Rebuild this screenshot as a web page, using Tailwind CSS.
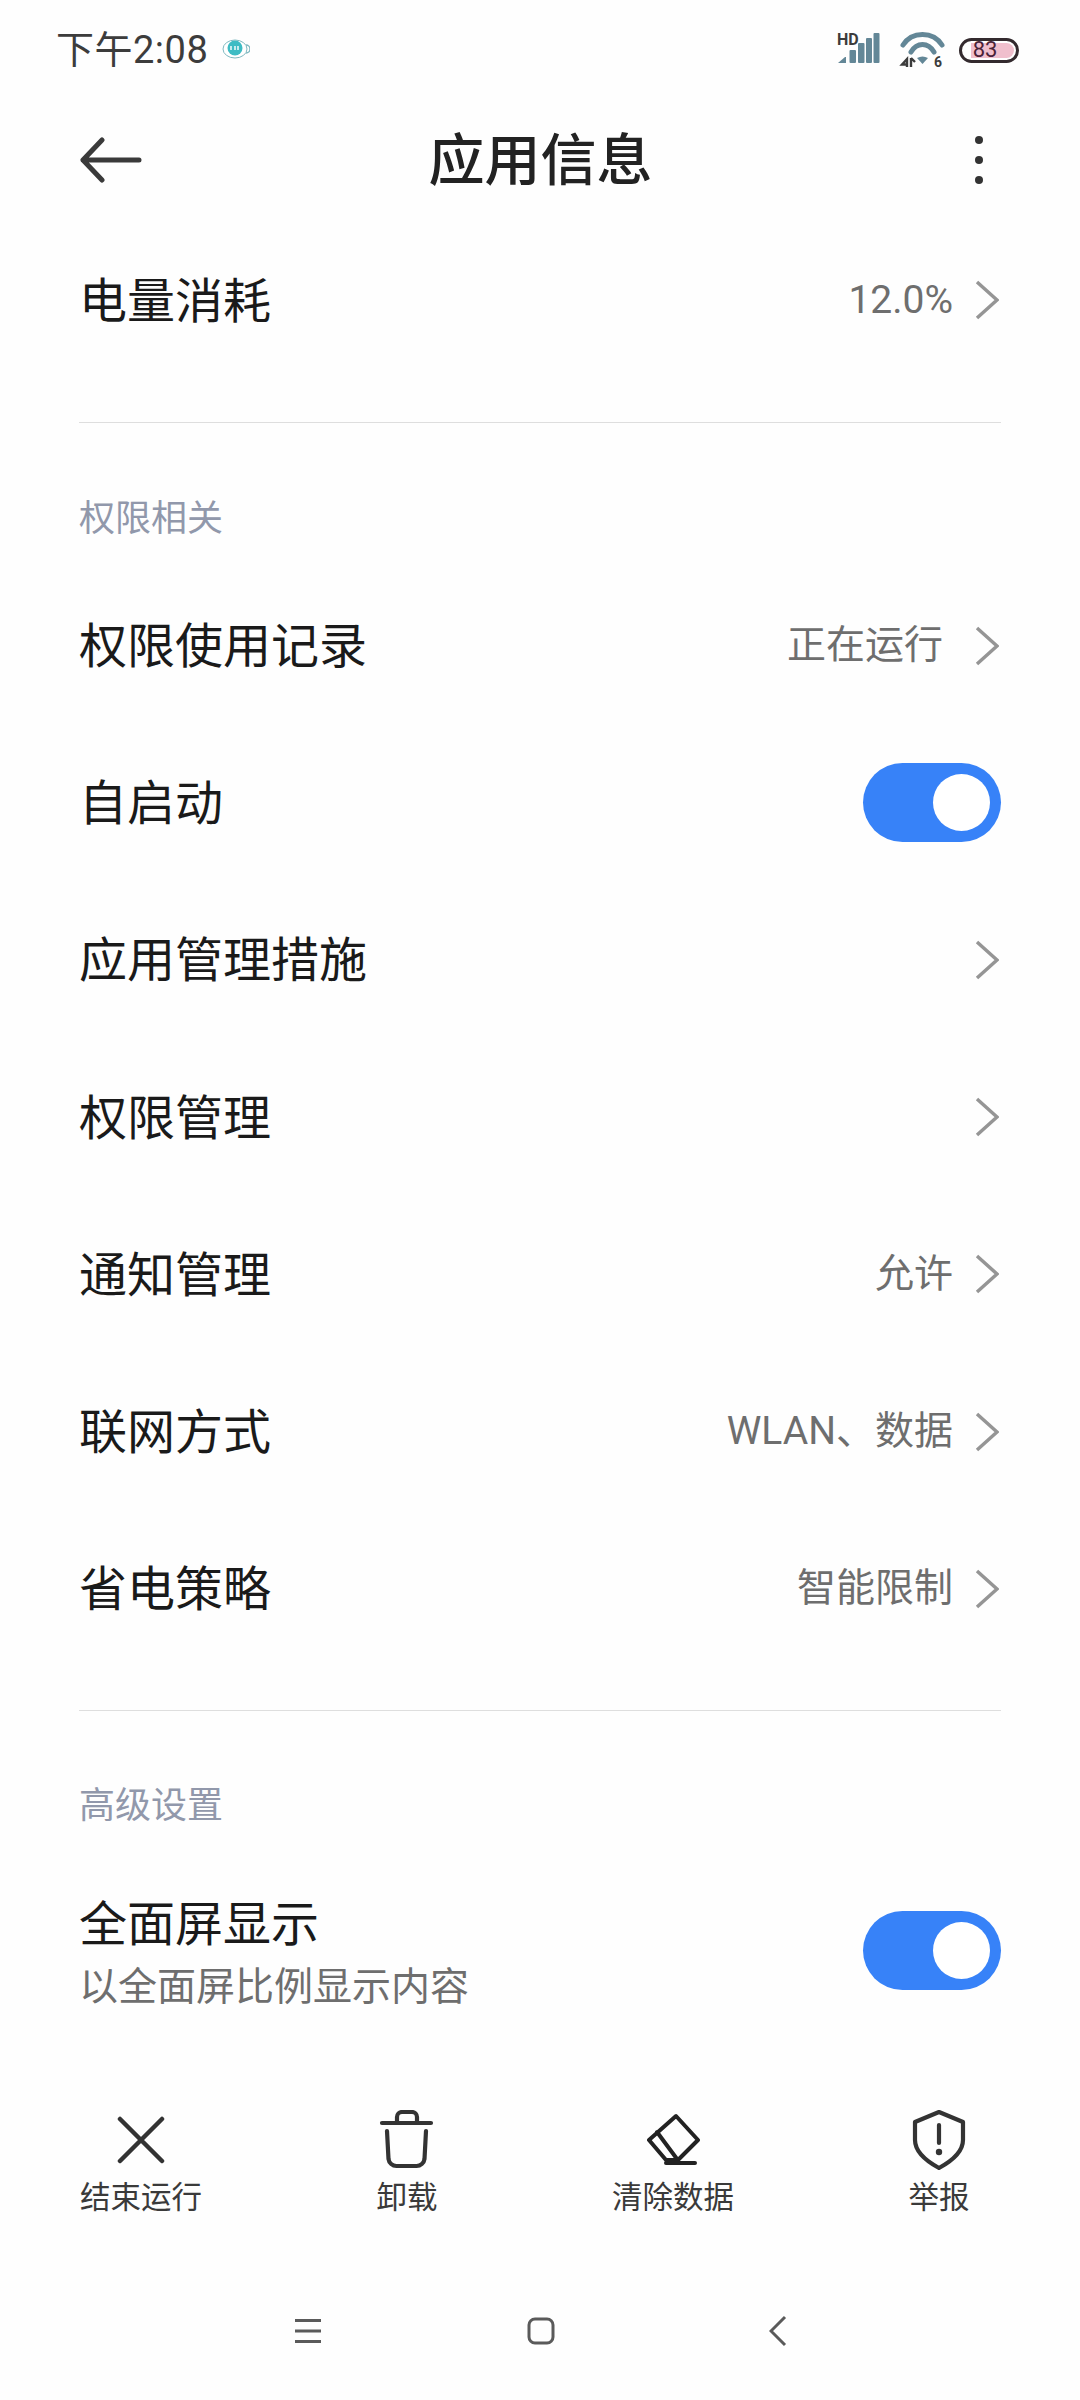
<!DOCTYPE html>
<html lang="zh"><head><meta charset="utf-8">
<script src="https://cdn.jsdelivr.net/npm/@tailwindcss/browser@4"></script>
</head>
<body class="m-0 bg-white">
<div class="w-[1080px] h-[2400px] flex flex-col overflow-hidden bg-[#fefefe] text-[#1a1a1a] font-['Roboto','Noto_Sans_CJK_SC',sans-serif]">
  <!-- status bar -->
  <div class="h-[100px] flex items-center justify-between pl-[56px] pr-[61px] shrink-0">
    <div class="flex items-center gap-[14px] text-[#3c3c3c] text-[38px] leading-none">
      <span class="tracking-[0.5px]">下午2:08</span>
      <svg width="28" height="24" viewBox="0 0 28 24"><ellipse cx="13" cy="11" rx="12" ry="9" fill="#fff" stroke="#7fb8c0" stroke-width="1"/><circle cx="13" cy="10" r="7.5" fill="#3dbcc4"/><path d="M24 7 a4 4 0 0 1 0 8" fill="none" stroke="#7fb8c0" stroke-width="1.5"/><path d="M9 8v4M13 8v4M16 8v4" stroke="#fff" stroke-width="1.4"/></svg>
    </div>
    <div class="flex items-center">
      <svg width="44" height="36" viewBox="0 0 44 36" class="overflow-visible">
        <text x="0" y="13" font-size="16" font-weight="700" fill="#3c3c3c" font-family="Roboto">HD</text>
        <path d="M1 31 L8 25 H9 V31 Z" fill="#638797"/><rect x="12.5" y="18" width="6.5" height="13" rx="1" fill="#638797"/><rect x="21" y="11" width="6.5" height="20" rx="1" fill="#638797"/><rect x="29" y="6" width="6" height="25" rx="1" fill="#638797"/><rect x="36.5" y="1" width="6" height="30" rx="1" fill="#638797"/>
      </svg>
      <svg width="46" height="36" viewBox="0 0 46 36" class="ml-[19px] overflow-visible">
        <path d="M3 13 C12 -1 33 -1 42 13" fill="none" stroke="#638797" stroke-width="5" stroke-linecap="round"/>
        <path d="M11 20 C17 10 28 10 34 20" fill="none" stroke="#638797" stroke-width="5" stroke-linecap="round"/>
        <path d="M17 26 Q22.5 23 28 26 L22.5 32 Z" fill="#638797"/>
        <path d="M7 35V27L2 32.5H7M11 26V35M11 26 L15 30" fill="none" stroke="#3c3c3c" stroke-width="2.4"/>
        <text x="34" y="35" font-size="14" font-weight="700" fill="#3c3c3c" font-family="Roboto">6</text>
      </svg>
      <div class="ml-[13px] relative w-[60px] h-[25px] rounded-full border-[3px] border-[#332a2e] overflow-hidden flex items-center justify-center">
        <div class="absolute left-[9px] top-[2px] bottom-[2px] right-[2px] bg-[#f0bfcd] rounded-r-full"></div>
        <span class="relative text-[22px] leading-none text-[#4a2238] -ml-[8px]">83</span>
      </div>
    </div>
  </div>
  <!-- header -->
  <div class="h-[120px] grid grid-cols-[1fr_auto_1fr] items-center pl-[80px] pr-[91px] shrink-0">
    <svg width="62" height="46" viewBox="0 0 62 46" fill="none" stroke="#3a3a3a" stroke-width="5" stroke-linecap="round" stroke-linejoin="round"><path d="M59 23H3M22 3 3 23l19 20"/></svg>
    <h1 class="text-[56px] font-medium leading-none text-[#222] translate-x-[6px] pt-[2px]">应用信息</h1>
    <div class="justify-self-end w-[20px] flex flex-col items-center gap-[12px]">
      <span class="size-[8px] rounded-full bg-[#333]"></span><span class="size-[8px] rounded-full bg-[#333]"></span><span class="size-[8px] rounded-full bg-[#333]"></span>
    </div>
  </div>
  <!-- list -->
  <div class="flex-1 px-[79px] flex flex-col">
    <div class="h-[160px] flex items-center justify-between shrink-0">
      <span class="text-[48px] pt-[3px]">电量消耗</span>
      <div class="flex items-center"><span class="text-[39px] text-[#6e6e6e]">12.0%</span><svg class="ml-[22px] mr-[2px]" width="24" height="40" viewBox="0 0 24 40" fill="none" stroke="#959595" stroke-width="3.5"><path d="M2 2 22 20 2 38"/></svg></div>
    </div>
    <div class="h-px bg-[#dedede] mt-[42px]"></div>
    <div class="h-[96px] mt-[48px] flex items-center text-[36px] text-[#9198ab]">权限相关</div>
    <div class="h-[157.2px] flex items-center justify-between">
      <span class="text-[48px] pt-[3px]">权限使用记录</span>
      <div class="flex items-center"><span class="text-[39px] text-[#6e6e6e]">正在运行</span><svg class="ml-[32px] mr-[2px]" width="24" height="40" viewBox="0 0 24 40" fill="none" stroke="#959595" stroke-width="3.5"><path d="M2 2 22 20 2 38"/></svg></div>
    </div>
    <div class="h-[157.2px] flex items-center justify-between">
      <span class="text-[48px] pt-[3px]">自启动</span>
      <div class="w-[138px] h-[79px] rounded-full bg-[#3782f8] flex items-center justify-end pr-[11px]"><span class="size-[57px] rounded-full bg-white"></span></div>
    </div>
    <div class="h-[157.2px] flex items-center justify-between">
      <span class="text-[48px] pt-[3px]">应用管理措施</span>
      <svg class="mr-[2px]" width="24" height="40" viewBox="0 0 24 40" fill="none" stroke="#959595" stroke-width="3.5"><path d="M2 2 22 20 2 38"/></svg>
    </div>
    <div class="h-[157.2px] flex items-center justify-between">
      <span class="text-[48px] pt-[3px]">权限管理</span>
      <svg class="mr-[2px]" width="24" height="40" viewBox="0 0 24 40" fill="none" stroke="#959595" stroke-width="3.5"><path d="M2 2 22 20 2 38"/></svg>
    </div>
    <div class="h-[157.2px] flex items-center justify-between">
      <span class="text-[48px] pt-[3px]">通知管理</span>
      <div class="flex items-center"><span class="text-[39px] text-[#6e6e6e]">允许</span><svg class="ml-[22px] mr-[2px]" width="24" height="40" viewBox="0 0 24 40" fill="none" stroke="#959595" stroke-width="3.5"><path d="M2 2 22 20 2 38"/></svg></div>
    </div>
    <div class="h-[157.2px] flex items-center justify-between">
      <span class="text-[48px] pt-[3px]">联网方式</span>
      <div class="flex items-center"><span class="text-[39px] text-[#6e6e6e]">WLAN、数据</span><svg class="ml-[22px] mr-[2px]" width="24" height="40" viewBox="0 0 24 40" fill="none" stroke="#959595" stroke-width="3.5"><path d="M2 2 22 20 2 38"/></svg></div>
    </div>
    <div class="h-[157.2px] flex items-center justify-between">
      <span class="text-[48px] pt-[3px]">省电策略</span>
      <div class="flex items-center"><span class="text-[39px] text-[#6e6e6e]">智能限制</span><svg class="ml-[22px] mr-[2px]" width="24" height="40" viewBox="0 0 24 40" fill="none" stroke="#959595" stroke-width="3.5"><path d="M2 2 22 20 2 38"/></svg></div>
    </div>
    <div class="h-px bg-[#dedede] mt-[43px]"></div>
    <div class="h-[96px] mt-[47px] flex items-center text-[36px] text-[#9198ab]">高级设置</div>
    <div class="h-[192px] flex items-center justify-between">
      <div class="flex flex-col pt-[11px]">
        <span class="text-[48px] leading-[63px]">全面屏显示</span>
        <span class="text-[39px] leading-[63px] text-[#6e6e6e]">以全面屏比例显示内容</span>
      </div>
      <div class="w-[138px] h-[79px] rounded-full bg-[#3782f8] flex items-center justify-end pr-[11px]"><span class="size-[57px] rounded-full bg-white"></span></div>
    </div>
  </div>
  <!-- actions -->
  <div class="h-[106px] px-[8px] grid grid-cols-4 shrink-0 text-[30.5px] text-[#3a3a3a]">
    <div class="flex flex-col items-center justify-between">
      <div class="h-[60px] flex items-center"><svg width="48" height="48" viewBox="0 0 48 48" fill="none" stroke="#333" stroke-width="4.5" stroke-linecap="round"><path d="M3 3 45 45M45 3 3 45"/></svg></div>
      <span class="leading-[36px]">结束运行</span>
    </div>
    <div class="flex flex-col items-center justify-between">
      <div class="h-[60px] flex items-center"><svg width="56" height="60" viewBox="0 0 56 60" fill="none" stroke="#333" stroke-width="4.2" stroke-linecap="round"><path d="M3 13H52M18 12V7a5 5 0 0 1 5-5h10a5 5 0 0 1 5 5v5M8 21l1.500 28a8 8 0 0 0 8 7h20a8 8 0 0 0 8-7l1.500-28"/></svg></div>
      <span class="leading-[36px]">卸载</span>
    </div>
    <div class="flex flex-col items-center justify-between">
      <div class="h-[60px] flex items-center"><svg width="54" height="54" viewBox="0 0 54 54" fill="none" stroke="#222" stroke-width="4" stroke-linecap="round" stroke-linejoin="round"><path d="M30 3 52 27 32 47H20L3 27ZM11 19 31 46M20 50H49"/></svg></div>
      <span class="leading-[36px]">清除数据</span>
    </div>
    <div class="flex flex-col items-center justify-between">
      <div class="h-[60px] flex items-center"><svg width="54" height="60" viewBox="0 0 54 60" fill="none" stroke="#333" stroke-width="4.2" stroke-linecap="round" stroke-linejoin="round"><path d="M27 2 51 12V30C51 43 38 52 27 58 16 52 3 43 3 30V12ZM27 15V33"/><circle cx="27" cy="42" r="3.2" fill="#333" stroke="none"/></svg></div>
      <span class="leading-[36px]">举报</span>
    </div>
  </div>
  <!-- nav bar -->
  <div class="h-[184px] shrink-0 pl-[295px] pt-[91px] flex items-start">
    <svg width="26" height="48" viewBox="0 0 26 48" fill="none" stroke="#5a5a5a" stroke-width="3"><path d="M0 13.500H26M0 24H26M0 34.500H26"/></svg>
    <svg width="28" height="48" viewBox="0 0 28 48" class="ml-[206px]" fill="none" stroke="#5a5a5a" stroke-width="3"><rect x="2" y="12" width="24" height="24" rx="6"/></svg>
    <svg width="18" height="48" viewBox="0 0 18 48" class="ml-[214px]" fill="none" stroke="#5a5a5a" stroke-width="3"><path d="M16 10 2 24 16 38"/></svg>
  </div>
</div>
</body></html>
